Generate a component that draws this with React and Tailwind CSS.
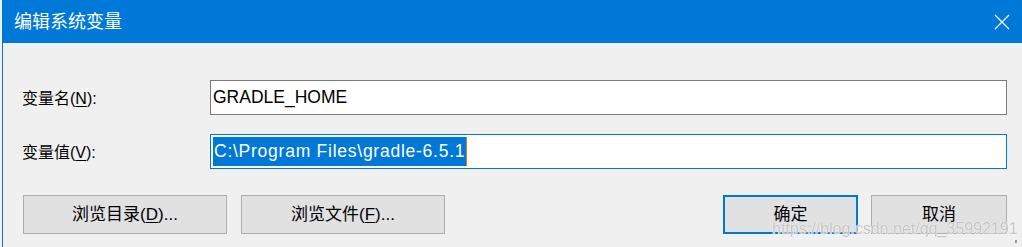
import React from "react";

const font = { fontFamily: '"Liberation Sans", "Noto Sans CJK SC", sans-serif' };

function Button({ children, className = "" }) {
  return (
    <button
      className={
        "h-[39px] bg-[#e1e1e1] text-[17px] text-black flex items-center justify-center " +
        className
      }
    >
      {children}
    </button>
  );
}

export default function App() {
  return (
    <div
      className="w-[1022px] h-[247px] bg-[#f0f0f0] flex overflow-hidden relative"
      style={font}
    >
      {/* left edge outside dialog */}
      <div className="w-[2px] bg-[#f0f0f0]" />
      <div className="flex-1 flex flex-col border-l border-[#0078d7]">
        {/* title bar */}
        <div className="h-[43px] bg-[#0078d7] flex items-center justify-between pl-[11px] pr-[12px]">
          <span className="text-white text-[18px] leading-none">编辑系统变量</span>
          <svg width="16" height="16" viewBox="0 0 16 16" className="mt-[1px]">
            <path d="M1 1 L15 15 M15 1 L1 15" stroke="white" strokeWidth="1.2" />
          </svg>
        </div>

        {/* body */}
        <div className="flex-1 flex flex-col pl-[19px] pr-[15px] pt-[37px]">
          <div className="flex items-center h-[35px]">
            <div className="w-[188px] text-[16px] text-black pt-[2px]">
              变量名(<span className="underline underline-offset-2">N</span>):
            </div>
            <div className="flex-1 h-[35px] bg-white border border-[#7a7a7a] flex items-center pl-[2px]">
              <span className="text-[17.5px] text-black leading-none">GRADLE_HOME</span>
            </div>
          </div>

          <div className="flex items-center h-[35px] mt-[19px]">
            <div className="w-[188px] text-[16px] text-black pt-[2px]">
              变量值(<span className="underline underline-offset-2">V</span>):
            </div>
            <div className="flex-1 h-[35px] bg-white border border-[#0078d7] flex items-center pl-[2px]">
              <span className="h-[29px] bg-[#0078d7] text-white text-[17.5px] tracking-[0.75px] leading-[29px] px-[1px]">
                C:\Program Files\gradle-6.5.1
              </span>
              <span className="w-[1px] h-[29px] bg-[#f07020]" />
            </div>
          </div>

          <div className="flex items-center mt-[26px]">
            <Button className="w-[204px] border border-[#adadad] ml-[1px]">
              浏览目录(<span className="underline underline-offset-2">D</span>)...
            </Button>
            <Button className="w-[204px] border border-[#adadad] ml-[14px]">
              浏览文件(<span className="underline underline-offset-2">F</span>)...
            </Button>
            <div className="flex-1" />
            <Button className="w-[135px] border-2 border-[#0078d7]">确定</Button>
            <Button className="w-[136px] border border-[#adadad] ml-[13px]">取消</Button>
          </div>
        </div>
      </div>

      {/* watermark */}
      <div
        className="absolute left-[772px] top-[217px] text-[16px] text-[#c4c4c4] pointer-events-none"
        style={{ textShadow: "0 0 1px #ffffff, 0 0 1px #ffffff" }}
      >
        https://blog.csdn.net/qq_35992191
      </div>
      <div className="absolute left-[1015px] top-[240px] w-[2px] h-[3px] bg-[#9a9a9a]" />
    </div>
  );
}
